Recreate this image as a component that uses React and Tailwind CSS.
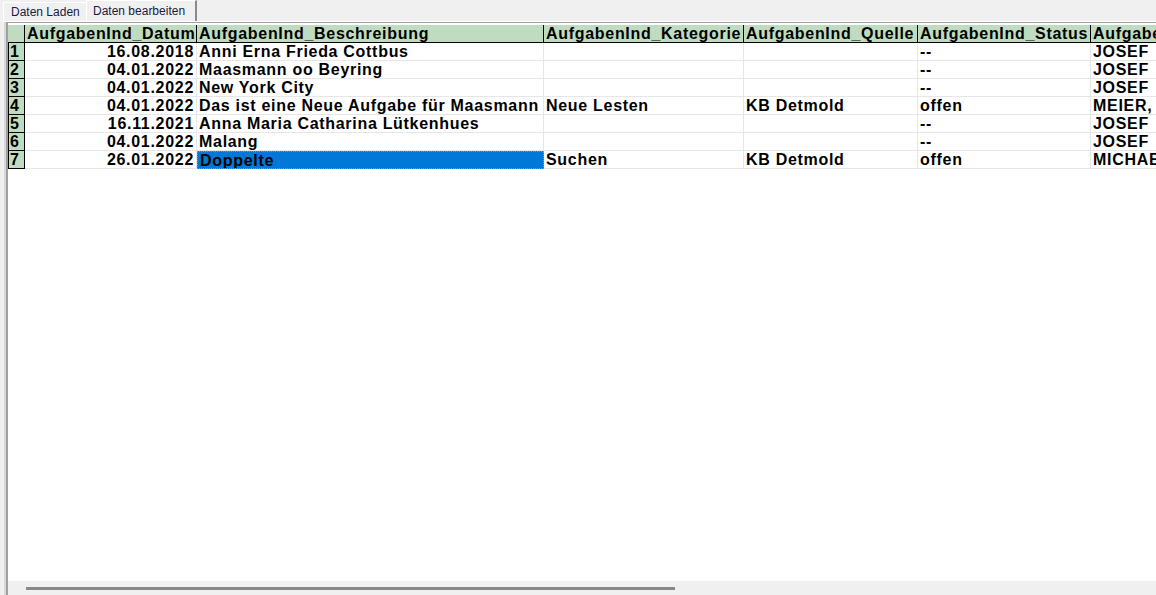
import React from 'react';

const cols = [
  { key: 'datum', title: 'AufgabenInd_Datum', w: 172, right: true },
  { key: 'besch', title: 'AufgabenInd_Beschreibung', w: 347 },
  { key: 'kat', title: 'AufgabenInd_Kategorie', w: 200 },
  { key: 'quelle', title: 'AufgabenInd_Quelle', w: 174 },
  { key: 'status', title: 'AufgabenInd_Status', w: 173 },
  { key: 'bearb', title: 'AufgabenInd_Bearbeiter', w: 220 },
];

const rows = [
  { datum: '16.08.2018', besch: 'Anni Erna Frieda Cottbus', kat: '', quelle: '', status: '--', bearb: 'JOSEF' },
  { datum: '04.01.2022', besch: 'Maasmann oo Beyring', kat: '', quelle: '', status: '--', bearb: 'JOSEF' },
  { datum: '04.01.2022', besch: 'New York City', kat: '', quelle: '', status: '--', bearb: 'JOSEF' },
  { datum: '04.01.2022', besch: 'Das ist eine Neue Aufgabe für Maasmann', kat: 'Neue Lesten', quelle: 'KB Detmold', status: 'offen', bearb: 'MEIER, HANS' },
  { datum: '16.11.2021', besch: 'Anna Maria Catharina Lütkenhues', kat: '', quelle: '', status: '--', bearb: 'JOSEF' },
  { datum: '04.01.2022', besch: 'Malang', kat: '', quelle: '', status: '--', bearb: 'JOSEF' },
  { datum: '26.01.2022', besch: 'Doppelte', kat: 'Suchen', quelle: 'KB Detmold', status: 'offen', bearb: 'MICHAEL' },
];

export default function App() {
  return (
    <div className="w-[1156px] h-[595px] bg-[#f0f0f0] overflow-hidden flex flex-col" style={{ fontFamily: '"Liberation Sans", Arial, sans-serif' }}>
      {/* tabs */}
      <div className="flex items-end h-[21px] pl-[3px] shrink-0">
        <div className="h-[19px] w-[83px] border-l border-t border-white flex items-center pl-[7px] text-[12px] text-[#1a1a40]">Daten Laden</div>
        <div className="h-[21px] w-[111px] border-l border-t border-white border-r-2 border-r-[#8a8a8a] flex items-center pl-[6px] pb-[1px] text-[12px] text-[#1a1a40]">Daten bearbeiten</div>
      </div>

      {/* panel */}
      <div className="flex-1 flex ml-[4px] border-t border-white">
        <div className="w-[2px] bg-[#d8d8d8]" />
        <div className="w-[2px] bg-[#a0a0a0]" />
        <div className="flex-1 flex flex-col min-w-0 border-t border-[#a0a0a0]">
          <div className="flex-1 bg-white overflow-hidden pt-[2px]">
            {/* header row */}
            <div className="flex h-[18px] bg-[#c0dcc0] border-b border-black w-max">
              <div className="w-[17px] border-r border-black" />
              {cols.map((c) => (
                <div key={c.key} style={{ width: c.w }} className="border-r border-black px-[2px] text-[16px] font-bold tracking-[0.7px] leading-[17px] whitespace-nowrap overflow-hidden text-black">
                  {c.title}
                </div>
              ))}
            </div>
            {rows.map((r, i) => (
              <div key={i} className="flex h-[18px] w-max">
                <div className="w-[17px] bg-[#c0dcc0] border border-black -mt-px h-[19px] text-[16px] font-bold leading-[17px] pl-[1px] text-black">
                  {i + 1}
                </div>
                {cols.map((c) => {
                  const sel = i === 6 && c.key === 'besch';
                  return (
                    <div
                      key={c.key}
                      style={{ width: c.w }}
                      className={
                        'px-[2px] text-[16px] font-bold tracking-[0.7px] leading-[17px] whitespace-nowrap overflow-hidden text-black ' +
                        (sel
                          ? 'bg-[#0078d7] border border-dotted border-[#e08020]'
                          : 'border-r border-b border-[#e6e6e6]') +
                        (c.right ? ' text-right' : '')
                      }
                    >
                      {r[c.key]}
                    </div>
                  );
                })}
              </div>
            ))}
          </div>
          {/* horizontal scrollbar */}
          <div className="h-[14px] bg-[#f0f0f0] shrink-0 flex items-center">
            <div className="ml-[18px] w-[649px] h-[3px] bg-[#888888]" />
          </div>
        </div>
      </div>
    </div>
  );
}
